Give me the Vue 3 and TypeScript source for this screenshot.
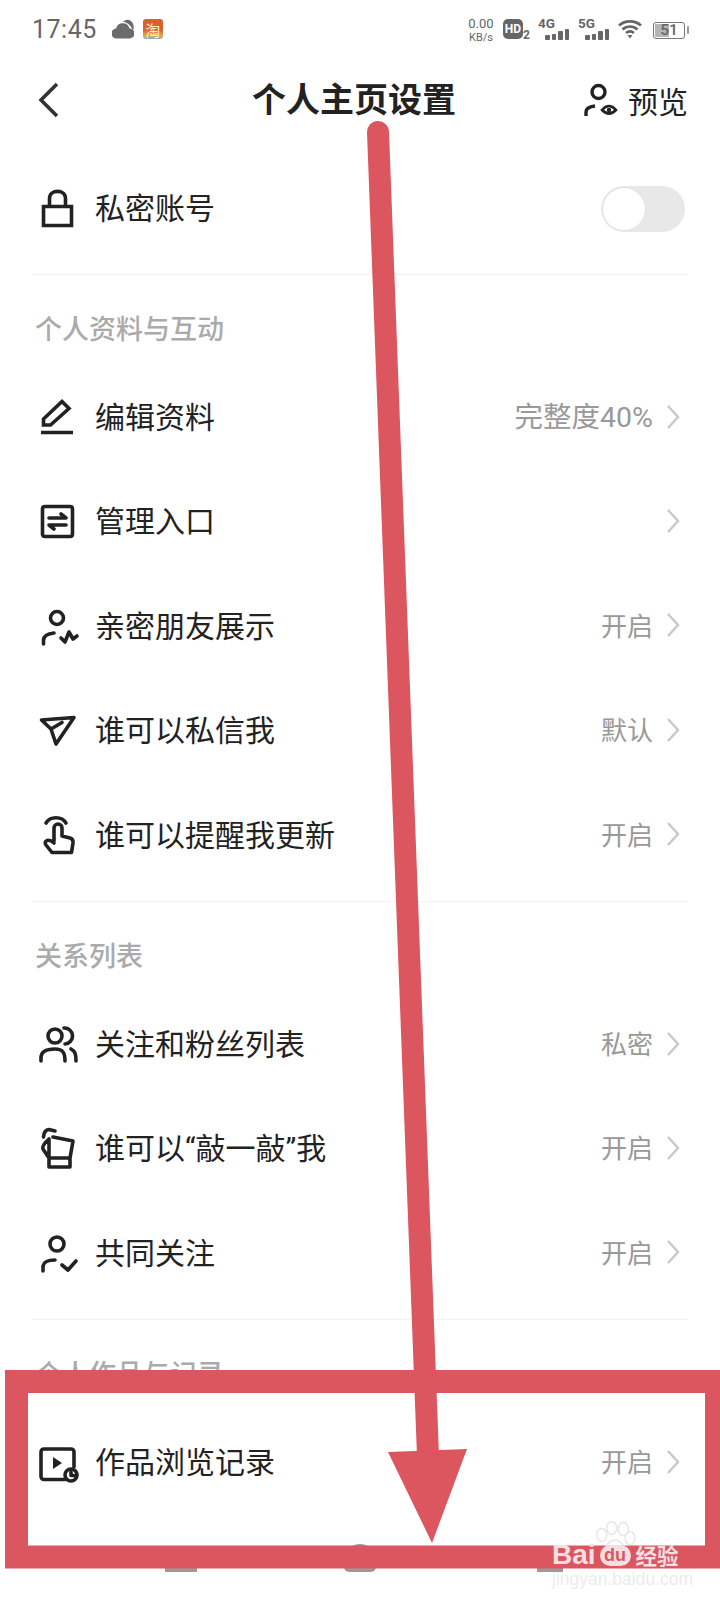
<script setup lang="ts">
interface Row {
  label: string;
  icon: string;
  value?: string;
}

interface Section {
  title: string;
  rows: Row[];
}

// each icon sits in a 40x44 box, stroke paths + optional filled path
const icons: Record<string, { d: string; fill?: string }> = {
  lock: { d: "M5.500 19.500H33.500V38.500H5.500ZM11.500 19V11.500C11.500 2 27.500 2 27.500 11.500V19" },
  edit: { d: "M5.500 29V23L24 5.500L31 12.500L12.500 29ZM3 36.500H35" },
  manage: {
    d: "M7 6.500H32Q34.500 6.500 34.500 9V34Q34.500 36.500 32 36.500H7Q4.500 36.500 4.500 34V9Q4.500 6.500 7 6.500ZM11 18H28L23 14M28 25H11L16 29",
  },
  friend: { d: "M12.500 13a6.500 6.500 0 1 0 13 0a6.500 6.500 0 1 0 -13 0M5.500 39V35Q6 29 16 28M23 33L27 37L31 27L35 34L39 31" },
  send: { d: "M3.500 11L36 8.500L18 35L13 20ZM13 20L24 13.500" },
  tap: {
    d: "M8 9C12 2 24 2 28 9M16 27V14a4 4 0 0 1 8 0V22L32 24Q35.500 25 35 29L33.500 38.500H14L8 31Q6 28 9 26.500Q12 25.500 16 29",
  },
  users: {
    d: "M10 13a7 7 0 1 0 14 0a7 7 0 1 0 -14 0M3 38V35C3 28 9 26 17 26C25 26 27 30 27 38M26 5A8 8 0 0 1 27 21M33 26C37 28 38 31 38 38",
  },
  knock: {
    d: "M15 10L35 14L32 31H11L5 22Q4 20 7 16L11 12V31M11 31V40H32V31M5.500 10Q6 3 11 2.500L17 4",
  },
  check: { d: "M12 12a7 7 0 1 0 14 0a7 7 0 1 0 -14 0M5 39V34Q6 28 17 28M24 33L30 38L38 29" },
  video: {
    d: "M27 38.500H6a3 3 0 0 1 -3 -3V11a3 3 0 0 1 3 -3H33a3 3 0 0 1 3 3V26M27 34a6 6 0 1 0 12 0a6 6 0 1 0 -12 0M33 31V34.500H36",
    fill: "M15 16L24 22L15 28Z",
  },
};

const privacyRow: Row = { label: "私密账号", icon: "lock" };

const sections: Section[] = [
  {
    title: "个人资料与互动",
    rows: [
      { label: "编辑资料", icon: "edit", value: "完整度40%" },
      { label: "管理入口", icon: "manage" },
      { label: "亲密朋友展示", icon: "friend", value: "开启" },
      { label: "谁可以私信我", icon: "send", value: "默认" },
      { label: "谁可以提醒我更新", icon: "tap", value: "开启" },
    ],
  },
  {
    title: "关系列表",
    rows: [
      { label: "关注和粉丝列表", icon: "users", value: "私密" },
      { label: "谁可以“敲一敲”我", icon: "knock", value: "开启" },
      { label: "共同关注", icon: "check", value: "开启" },
    ],
  },
  {
    title: "个人作品与记录",
    rows: [{ label: "作品浏览记录", icon: "video", value: "开启" }],
  },
];

const signalBars = [5, 6, 9, 11];
</script>

<template>
  <div class="page">
    <div class="status">
      <span class="time">17:45</span>
      <svg class="cloud" width="22" height="20" viewBox="0 0 22 20">
        <path d="M5 19.500a5 5 0 0 1 -1 -10a7 7 0 0 1 13.500 0a5 5 0 0 1 0 10Z" fill="#6c6c6c" />
        <path d="M11 2.500Q16 -1 20 3Q23 7 21 11.500Q18 4 11 2.500Z" fill="#6c6c6c" />
      </svg>
      <span class="taobao">淘</span>
      <span class="status-right">
        <span class="speed"><b>0.00</b><i>KB/s</i></span>
        <span class="hd">HD</span><span class="hd-num">2</span>
        <span v-for="net in ['4G', '5G']" :key="net" class="net">
          <em>{{ net }}</em>
          <span class="bars">
            <span v-for="(h, i) in signalBars" :key="i" :style="{ height: h + 'px' }"></span>
          </span>
        </span>
        <svg class="wifi" width="24" height="20" viewBox="0 0 24 20" fill="none" stroke="#666" stroke-width="2.600">
          <path d="M1 6.500C7 1 17 1 23 6.500M4.500 10.500C9 6.500 15 6.500 19.500 10.500M8 14C10.500 12 13.500 12 16 14" />
          <path d="M9.500 16H14.500L12 19.500Z" fill="#666" stroke="none" />
        </svg>
        <span class="battery"><span class="battery-level"></span><span class="battery-num">51</span></span>
      </span>
    </div>

    <div class="nav">
      <svg class="back" width="24" height="38" viewBox="0 0 24 38" fill="none" stroke="#333" stroke-width="3.600">
        <path d="M20 3L4 19L20 35" />
      </svg>
      <h1 class="title">个人主页设置</h1>
      <div class="preview">
        <svg width="36" height="36" viewBox="0 0 36 36" fill="none" stroke="#222" stroke-width="3.400">
          <path d="M9 10a6.500 6.500 0 1 0 13 0a6.500 6.500 0 1 0 -13 0M3 34V30Q3 25 12 24" />
          <path d="M19 28Q26 20 33 28Q26 35 19 28Z" stroke-width="2.600" />
          <circle cx="26" cy="28" r="2.200" fill="#222" stroke="none" />
        </svg>
        <span>预览</span>
      </div>
    </div>

    <div class="row">
      <svg class="icon" width="40" height="44" viewBox="0 0 40 44" fill="none">
        <path :d="icons[privacyRow.icon].d" class="icon-sharp" />
      </svg>
      <span class="label">{{ privacyRow.label }}</span>
      <span class="toggle"><span class="knob"></span></span>
    </div>

    <section v-for="section in sections" :key="section.title">
      <div class="divider"></div>
      <div class="section-title">{{ section.title }}</div>
      <div v-for="row in section.rows" :key="row.label" class="row">
        <svg class="icon" width="40" height="44" viewBox="0 0 40 44" fill="none">
          <path :d="icons[row.icon].d" :class="{ 'icon-sharp': row.icon === 'edit' }" />
          <path v-if="icons[row.icon].fill" :d="icons[row.icon].fill" class="icon-fill" />
        </svg>
        <span class="label">{{ row.label }}</span>
        <span v-if="row.value" class="value" :class="{ 'value-long': row.value.length > 2 }">{{ row.value }}</span>
        <svg class="chevron" width="14" height="26" viewBox="0 0 14 26" fill="none">
          <path d="M2 2L12 13L2 24" />
        </svg>
      </div>
    </section>

    <div class="tabs">
      <span class="tab"></span>
      <span class="tab tab-home"></span>
      <span class="tab tab-me"></span>
    </div>

    <!-- red annotation drawn over the screenshot -->
    <svg class="annotation" width="720" height="1600" viewBox="0 0 720 1600" fill="none">
      <path d="M16.500 1381.500H716.500V1557H16.500Z" stroke="#dc5660" stroke-width="23" />
      <path d="M378 132L428 1456" stroke="#dc5660" stroke-width="22" stroke-linecap="round" />
      <path d="M388 1452L467 1449L432 1543Z" fill="#dc5660" />
    </svg>

    <div class="watermark">
      <svg class="paw" width="42" height="30" viewBox="0 0 42 30" fill="none">
        <ellipse cx="6.700" cy="14" rx="5" ry="6.500" />
        <ellipse cx="16.700" cy="7" rx="5" ry="6.500" />
        <ellipse cx="28.300" cy="8" rx="5" ry="6.500" />
        <ellipse cx="35" cy="17" rx="5" ry="6.500" />
        <path d="M9 30Q13 19 20 19Q27 19 31 30" />
      </svg>
      <div class="wm-line">
        <span class="wm-bai">Bai</span><span class="wm-du">du</span><span class="wm-cn">经验</span>
      </div>
      <div class="wm-url">jingyan.baidu.com</div>
    </div>
  </div>
</template>

<style>
html,
body {
  margin: 0;
  background: #fff;
}
</style>

<style scoped>
.page {
  position: relative;
  width: 720px;
  height: 1600px;
  overflow: hidden;
  background: #fff;
  color: #222;
  font-family: Roboto, "Noto Sans CJK SC", sans-serif;
}

.status {
  display: flex;
  align-items: center;
  height: 58px;
  padding: 0 35px 0 32px;
  color: #666;
}

.time {
  font-family: Roboto, sans-serif;
  font-size: 25px;
  letter-spacing: 0.5px;
}

.cloud {
  margin-left: 15px;
}

.taobao {
  display: flex;
  align-items: center;
  justify-content: center;
  width: 20px;
  height: 20px;
  margin-left: 9px;
  border-radius: 3px;
  background: linear-gradient(#d9622a 55%, #e9a23f 80%, #8fb3c9);
  color: #fff3d0;
  font-family: "Noto Sans CJK SC", sans-serif;
  font-size: 15px;
  line-height: 1;
}

.status-right {
  display: flex;
  align-items: center;
  margin-left: auto;
}

.speed {
  display: flex;
  flex-direction: column;
  align-items: center;
  width: 28px;
  margin-top: 1px;
}

.speed b {
  font-size: 13px;
  font-weight: 400;
  line-height: 15px;
}

.speed i {
  font-size: 11px;
  font-style: normal;
  line-height: 13px;
}

.hd {
  width: 20px;
  height: 20px;
  margin-left: 8px;
  border-radius: 5px;
  background: #666;
  color: #fff;
  font-size: 12px;
  font-weight: 700;
  line-height: 20px;
  text-align: center;
}

.hd-num {
  align-self: flex-end;
  width: 7px;
  margin-bottom: 2px;
  font-size: 12px;
  font-weight: 700;
  line-height: 14px;
}

.net {
  position: relative;
  width: 32px;
  height: 22px;
  margin-left: 8px;
}

.net em {
  position: absolute;
  top: -3px;
  left: 0;
  font-size: 13.500px;
  font-style: normal;
  font-weight: 700;
  line-height: 16px;
}

.bars {
  position: absolute;
  right: 1px;
  bottom: 0;
  display: flex;
  align-items: flex-end;
  gap: 2px;
}

.bars span {
  width: 4.500px;
  border-radius: 1px;
  background: #666;
}

.wifi {
  margin-left: 8px;
}

.battery {
  position: relative;
  box-sizing: border-box;
  width: 32px;
  height: 17px;
  margin: 2px 0 0 11px;
  border: 1.500px solid #777;
  border-radius: 3px;
}

.battery::after {
  content: "";
  position: absolute;
  top: 3px;
  right: -5px;
  width: 2px;
  height: 8px;
  border-radius: 1px;
  background: #999;
}

.battery-level {
  position: absolute;
  top: 1px;
  bottom: 1px;
  left: 1px;
  width: 14px;
  background: #b5b5b5;
}

.battery-num {
  position: absolute;
  inset: 0;
  font-size: 15.500px;
  font-weight: 500;
  line-height: 14px;
  text-align: center;
}

.nav {
  display: flex;
  align-items: center;
  height: 84px;
  margin-bottom: 14.500px;
  padding: 0 32px 0 37px;
}

.title {
  margin: 0 0 0 191px;
  font-size: 34px;
  font-weight: 700;
  line-height: 48px;
}

.preview {
  display: flex;
  align-items: center;
  gap: 9px;
  margin-left: auto;
  font-size: 30px;
}

.row {
  display: flex;
  align-items: center;
  height: 104.4px;
  padding: 0 40px 0 38px;
}

.icon {
  flex: none;
  overflow: visible;
}

.icon path {
  stroke: #222;
  stroke-width: 3.600;
  stroke-linejoin: round;
  stroke-linecap: round;
}

.icon .icon-sharp {
  stroke-linejoin: miter;
  stroke-linecap: butt;
}

.icon .icon-fill {
  fill: #222;
  stroke: none;
}

.label {
  margin-left: 17px;
  font-size: 30px;
  line-height: 40px;
}

.value {
  margin-left: auto;
  color: #999;
  font-size: 26px;
  line-height: 40px;
}

.value-long {
  font-size: 28.500px;
}

.chevron {
  flex: none;
  margin: -3px 0 0 13px;
}

.label + .chevron {
  margin-left: auto;
}

.chevron path {
  stroke: #c8c8c8;
  stroke-width: 2.400;
}

.toggle {
  display: block;
  width: 84px;
  height: 46px;
  margin-left: auto;
  margin-right: -5px;
  border-radius: 23px;
  background: #e8e8e8;
}

.knob {
  display: block;
  box-sizing: border-box;
  width: 44px;
  height: 44px;
  margin: 1px;
  border: 1px solid #e2e2e2;
  border-radius: 50%;
  background: #fff;
}

.divider {
  height: 1px;
  margin: 13px 32px 0;
  background: #f3f3f3;
}

.section-title {
  height: 40px;
  padding: 35px 0 16px 35px;
  color: #aaa;
  font-size: 27px;
  font-weight: 500;
  line-height: 40px;
}

.tabs {
  position: absolute;
  left: 165px;
  top: 1542px;
  display: flex;
  align-items: flex-end;
  height: 30px;
}

.tab {
  width: 32px;
  height: 25px;
  background: #9a9a9a;
}

.tab-home {
  height: 28px;
  margin-left: 147px;
  border-radius: 16px 16px 5px 5px;
}

.tab-me {
  width: 26px;
  height: 26px;
  margin-left: 161px;
}

.annotation {
  position: absolute;
  top: 0;
  left: 0;
}

.watermark {
  position: absolute;
  top: 1521px;
  left: 552px;
  width: 132px;
  color: #f6dfe1;
}

.paw {
  display: block;
  margin-left: 43px;
}

.paw ellipse,
.paw path {
  stroke: #e6e6e6;
  stroke-width: 1.500;
}

.wm-line {
  display: flex;
  align-items: center;
  height: 24px;
  margin-top: -8px;
  font-family: "Liberation Sans", sans-serif;
  font-weight: 700;
}

.wm-bai {
  font-size: 28px;
  line-height: 24px;
}

.wm-du {
  width: 31px;
  height: 21px;
  margin-left: 4px;
  border-radius: 11px;
  background: #f6dfe1;
  color: #dc5660;
  font-size: 18px;
  line-height: 20px;
  text-align: center;
}

.wm-cn {
  margin-left: 5px;
  font-family: "Noto Sans CJK SC", sans-serif;
  font-size: 21.500px;
  line-height: 24px;
}

.wm-url {
  margin-top: 3px;
  color: #ececec;
  font-family: "Liberation Sans", sans-serif;
  font-size: 17.500px;
  line-height: 18px;
}
</style>
